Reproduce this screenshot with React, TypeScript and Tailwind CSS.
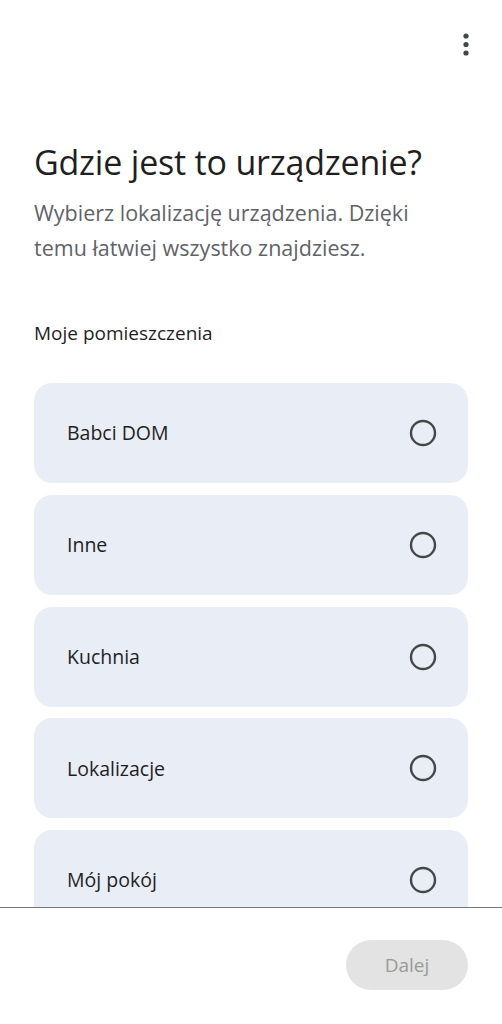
import React from "react";

const rooms = ["Babci DOM", "Inne", "Kuchnia", "Lokalizacje", "Mój pokój"];

function Radio() {
  return (
    <svg width="30" height="30" viewBox="0 0 30 30" className="shrink-0">
      <circle cx="15" cy="15" r="12" fill="none" stroke="#444746" strokeWidth="2.4" />
    </svg>
  );
}

export default function App() {
  return (
    <div
      className="w-[502px] h-[1024px] bg-white flex flex-col overflow-hidden"
      style={{ fontFamily: "'Open Sans', Roboto, sans-serif" }}
    >
      <div className="flex-1 min-h-0 overflow-hidden">
        <div className="flex justify-end pt-[31px] pr-[30px]">
          <svg width="12" height="28" viewBox="0 0 12 28">
            <circle cx="6" cy="5" r="2.6" fill="#444746" />
            <circle cx="6" cy="13.5" r="2.6" fill="#444746" />
            <circle cx="6" cy="22" r="2.6" fill="#444746" />
          </svg>
        </div>
        <div className="px-[34px]">
          <h1 className="mt-[83px] text-[34px] leading-[40px] text-[#1f1f1f] tracking-[-0.2px]">
            Gdzie jest to urządzenie?
          </h1>
          <p className="mt-[13px] text-[21.5px] leading-[35px] text-[#5f6368]">
            Wybierz lokalizację urządzenia. Dzięki
            <br />
            temu łatwiej wszystko znajdziesz.
          </p>
          <div className="mt-[56px] text-[19px] leading-[24px] text-[#1f1f1f]">Moje pomieszczenia</div>
          <div className="mt-[38px] flex flex-col gap-[11.75px]">
            {rooms.map((r) => (
              <div
                key={r}
                className="h-[100px] shrink-0 rounded-[18px] bg-[#e9edf5] flex items-center justify-between pl-[33px] pr-[30px]"
              >
                <span className="text-[19.5px] text-[#1f1f1f]">{r}</span>
                <Radio />
              </div>
            ))}
          </div>
        </div>
      </div>
      <div className="h-[117px] shrink-0 border-t border-[#747775] flex justify-end items-start pt-[32px] pr-[34px]">
        <button className="w-[122px] h-[50px] rounded-full bg-[#e3e3e3] text-[#9a9a9a] text-[19px]">
          Dalej
        </button>
      </div>
    </div>
  );
}
